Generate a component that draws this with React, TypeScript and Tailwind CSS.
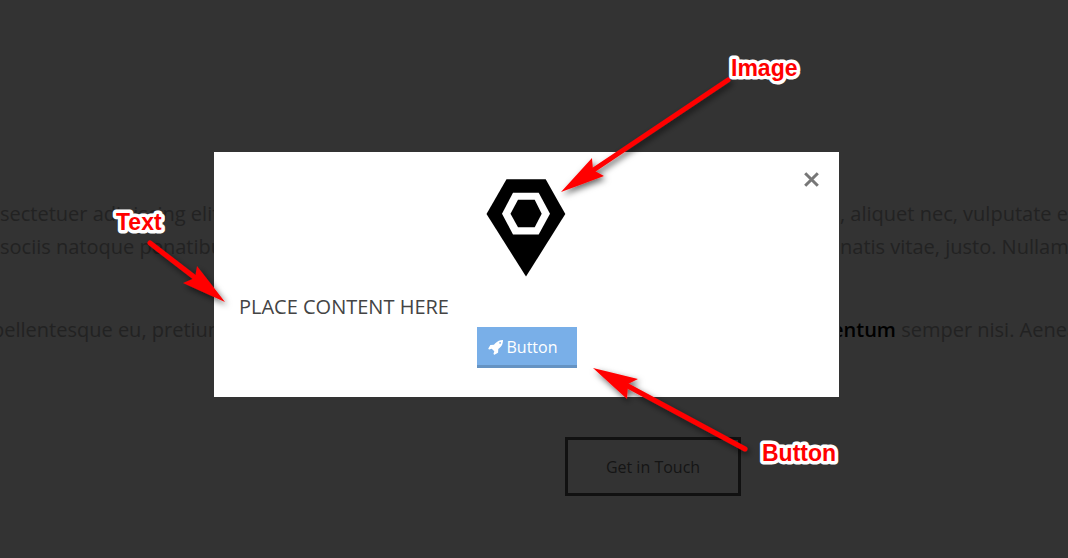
import {useState} from 'react';

interface Callout {
	label: string;
	x: number;
	y: number;
	from: [number, number];
	to: [number, number];
	head: string;
}

const CALLOUTS: Callout[] = [
	{label: 'Image', x: 731, y: 76, from: [728, 80], to: [592, 171], head: '561,192 592,158 593,170 604,176'},
	{label: 'Text', x: 116, y: 230, from: [150, 243], to: [198, 280], head: '225,302 197,266 195,278 183,283'},
	{label: 'Button', x: 762, y: 461, from: [745, 449], to: [626, 385], head: '593,368 638,379 628,384 627,399'},
];

function PinLogo() {
	return (
			<svg className="mx-auto block" width="81" height="98" viewBox="486 179 81 98" aria-label="Logo">
				<polygon points="506.5,179.3 545.7,179.3 565.3,214 526,276.6 486.5,214" fill="#000"/>
				<polygon points="513,192.7 538.7,192.7 550,213.7 538.7,234.5 513,234.5 502,213.7" fill="#fff"/>
				<polygon points="518,199.7 534.7,199.7 541.7,213.7 534.7,227.3 518,227.3 510.5,213.7" fill="#000"/>
			</svg>
	);
}

function RocketIcon() {
	return (
			<svg width="15" height="15" viewBox="0 128 1664 1664" fill="currentColor" aria-hidden="true">
				<path d="M1440 448q0-40-28-68t-68-28-68 28-28 68 28 68 68 28 68-28 28-68zm224-288q0 249-75.5 430.5t-253.5 360.5q-81 80-195 176l-20 379q-2 16-16 26l-384 224q-7 4-16 4-12 0-23-9l-64-64q-13-14-8-32l85-276-281-281-276 85q-3 1-9 1-14 0-23-9l-64-64q-17-19-5-39l224-384q10-14 26-16l379-20q96-114 176-195 188-187 358-258t431-71q14 0 24 9.5t10 22.5z"/>
			</svg>
	);
}

function PageBehind() {
	return (
			<main className="pt-[197px] text-xl leading-[33px] text-[#222]">
				<div className="flex justify-between whitespace-nowrap">
					<div className="w-[230px] overflow-hidden">
						<p>sectetuer adipiscing elit</p>
						<p>sociis natoque penatibus</p>
						<p className="mt-[50px] -indent-2">pellentesque eu, pretium</p>
					</div>
					<div className="w-[228px] overflow-hidden">
						<p>, aliquet nec, vulputate eget</p>
						<p>natis vitae, justo. Nullam</p>
						<p className="mt-[50px] -indent-2"><strong className="font-semibold text-black">entum</strong> semper nisi. Aenean</p>
					</div>
				</div>
				<div className="flex justify-center pt-[91px] pl-[238px]">
					<button type="button" className="h-[59px] w-[176px] border-3 border-[#111] text-base text-[#151515]">
						Get in Touch
					</button>
				</div>
			</main>
	);
}

function Modal({onClose}: {onClose: () => void}) {
	return (
			<div className="absolute inset-0 flex items-start justify-center pt-[152px] pr-[15px]">
				<div role="dialog" aria-label="Content" className="relative w-[625px] bg-white px-[25px] pt-[27px] pb-[29px]">
					<button type="button" aria-label="Close" onClick={onClose} className="absolute top-5 right-5 text-[#777]">
						<svg width="15" height="15" viewBox="0 0 15 15" stroke="currentColor" strokeWidth="3">
							<path d="M1.2 1.2 13.8 13.8M13.8 1.2 1.2 13.8"/>
						</svg>
					</button>
					<PinLogo/>
					<p className="pt-[13px] text-xl leading-[33px] text-[#444]">PLACE CONTENT HERE</p>
					<button
							type="button"
							className="mx-auto mt-1 flex h-[41px] w-[100px] items-center gap-1 border-b-3 border-[#6593c3] bg-[#79afe8] pt-0.5 pl-[11px] text-base text-white"
					>
						<RocketIcon/>
						Button
					</button>
				</div>
			</div>
	);
}

function Callouts() {
	return (
			<svg className="pointer-events-none absolute top-0 left-0" width="1068" height="558" viewBox="0 0 1068 558">
				<defs>
					<filter id="shadow" x="-20%" y="-20%" width="140%" height="150%">
						<feDropShadow dx="2" dy="3" stdDeviation="3" floodOpacity="0.6"/>
					</filter>
				</defs>
				{CALLOUTS.map(({label, x, y, from, to, head}) => (
						<g key={label}>
							<g fill="#f00" stroke="#f00" filter="url(#shadow)">
								<line x1={from[0]} y1={from[1]} x2={to[0]} y2={to[1]} strokeWidth="5" strokeLinecap="round"/>
								<polygon points={head} stroke="none"/>
							</g>
							<text
									x={x}
									y={y}
									fill="#f00"
									stroke="#fff"
									strokeWidth="7"
									strokeLinejoin="round"
									paintOrder="stroke"
									className="font-['Liberation_Sans',Arial,sans-serif] text-[23px] font-bold"
							>
								{label}
							</text>
						</g>
				))}
			</svg>
	);
}

export default function App() {
	const [open, setOpen] = useState(true);

	return (
			<div className="relative min-h-screen overflow-hidden bg-[#333] font-['Open_Sans','Noto_Sans',sans-serif]">
				<PageBehind/>
				{open && <Modal onClose={() => setOpen(false)}/>}
				<Callouts/>
			</div>
	);
}
